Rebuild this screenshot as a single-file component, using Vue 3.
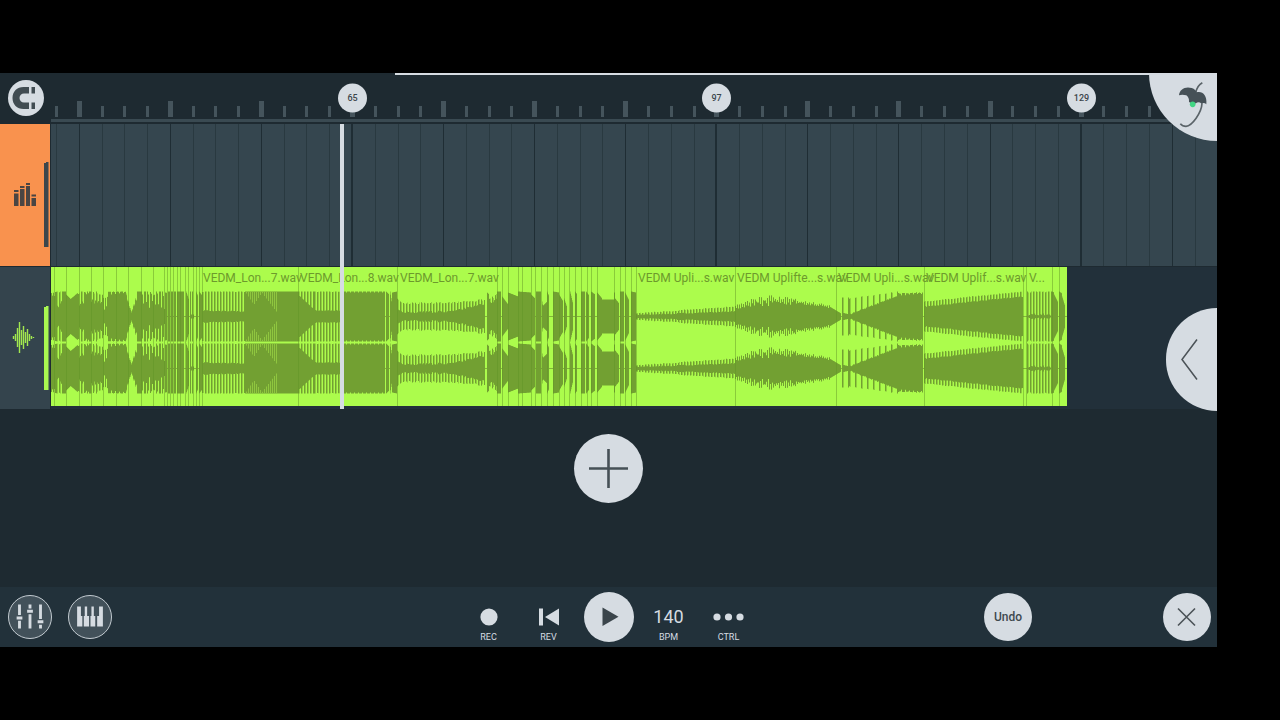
<template>
  <div class="screen">
    <main class="studio">
      <header class="topbar">
        <div class="snap">
          <button class="round snap-btn" aria-label="Snap">
            <svg width="36" height="36" viewBox="0 0 36 36">
              <path d="M21 7H15.500C9 7 4.500 11.500 4.500 18S9 29 15.500 29H21V22.500H16C13.500 22.500 11.500 20.500 11.500 18S13.500 13.500 16 13.500H21Z" fill="#414c52" />
              <path d="M23.500 7H27V13.500H23.500ZM23.500 22.500H27V29H23.500Z" fill="#414c52" />
            </svg>
          </button>
        </div>
        <svg class="ruler" height="51">
          <rect x="0" y="46" width="100%" height="3" fill="#3a4a52" />
          <rect
            v-for="tick in ticks"
            :key="tick.x"
            :x="tick.x - (tick.major ? 2.5 : 1.5)"
            :y="tick.major ? 28 : 33"
            :width="tick.major ? 5 : 3"
            :height="tick.major ? 16 : 11"
            fill="#45545c"
          />
          <g v-for="mark in marks" :key="mark.label">
            <circle :cx="mark.x" cy="25" r="14.500" fill="#d6dce2" />
            <text class="mark-text" :x="mark.x" y="28" text-anchor="middle">{{ mark.label }}</text>
          </g>
        </svg>
        <div class="overview"></div>
      </header>

      <section class="tracks">
        <div class="track">
          <button class="track-head drums" aria-label="Drum track">
            <svg width="50" height="142" viewBox="0 0 50 142">
              <g fill="#4a4543">
                <path d="M14 69.500H18.500V82H14ZM20 65H24.500V82H20ZM26 62H30V82H26ZM31.500 74H36V82H31.500Z" />
                <path d="M14 66H18.500V68H14ZM20 62H24.500V64H20ZM26 59H30V61H26ZM31.500 70.500H36V72.500H31.500Z" />
              </g>
              <path d="M44 39H46V38H48.500V123H44Z" fill="#3c474c" />
            </svg>
          </button>
          <svg class="lane" height="142">
            <rect
              v-for="tick in ticks"
              :key="tick.x"
              :x="tick.x - (tick.bold ? 1.5 : 0.5)"
              y="0"
              :width="tick.bold ? 2 : 1"
              height="142"
              :fill="tick.major ? '#1f2d34' : '#293940'"
            />
          </svg>
        </div>

        <div class="track">
          <button class="track-head audio" aria-label="Audio track">
            <svg width="50" height="142" viewBox="0 0 50 142">
              <path
                d="M13.500 69V72M15.500 67V74M17.500 61V80M19.500 55V86M21.500 63V78M23.500 59V82M25.500 65V76M27.500 62V79M29.500 67V74M31.500 69V72M33.500 70V71"
                stroke="#a2e84f"
                stroke-width="1.400"
              />
              <path d="M44 40H46V39H48.500V123H44Z" fill="#a9f750" />
            </svg>
          </button>
          <div class="lane empty">
            <div class="clip">
              <svg class="wave" width="1016" height="139">
                <rect x="0" y="49" width="1016" height="1" fill="#83b53a" />
                <rect x="0" y="101" width="1016" height="1" fill="#83b53a" />
                <path :d="wavePath" fill="#72a032" />
                <path :d="shadePath" fill="#8fc63f" />
                <rect v-for="x in cuts" :key="x" :x="x" y="0" width="1" height="139" fill="#5f9226" fill-opacity="0.45" />
              </svg>
              <div class="labels">
                <span v-for="(clip, i) in clips" :key="i" :style="{ width: clip.width + 'px' }">{{ clip.name }}</span>
              </div>
            </div>
          </div>
        </div>
        <div class="playhead"></div>
        <button class="drawer" aria-label="Open panel">
          <svg width="51" height="103" viewBox="0 0 51 103">
            <path d="M31 31.500L16 51.500L31 71.500" fill="none" stroke="#4b5257" stroke-width="1.500" />
          </svg>
        </button>
      </section>

      <section class="workspace">
        <button class="round add" aria-label="Add track">
          <svg width="69" height="69" viewBox="0 0 69 69">
            <path d="M15 34.500H54M34.500 15V54" stroke="#465056" stroke-width="2.600" />
          </svg>
        </button>
      </section>

      <footer class="transport">
        <div class="group">
          <div class="cell">
            <button class="round outlined" aria-label="Mixer">
              <svg width="44" height="44" viewBox="0 0 44 44" fill="#d6dce2">
                <path d="M9.500 9H12.500V20H9.500ZM9.500 26H12.500V34H9.500ZM8 21.500H14V24.500H8Z" />
                <path d="M20.500 9H23.500V13H20.500ZM20.500 19H23.500V34H20.500ZM19 14.500H25V17.500H19Z" />
                <path d="M31.500 9H34.500V24H31.500ZM31.500 30H34.500V34H31.500ZM30 25.500H36V28.500H30Z" />
              </svg>
            </button>
          </div>
          <div class="cell">
            <button class="round outlined" aria-label="Keyboard">
              <svg width="44" height="44" viewBox="0 0 44 44" fill="#d6dce2">
                <path d="M8.500 11H12.500V21H14V32H8.500ZM16.500 11H19V21H21V32H15.500V21H16.500ZM23.500 11H26V21H27.500V32H22.500V21H23.500ZM31.500 11H35.500V32H29.500V21H31.500Z" />
              </svg>
            </button>
          </div>
        </div>

        <div class="group">
          <button class="cell control">
            <svg width="32" height="22" viewBox="0 0 32 22"><circle cx="16" cy="11" r="8.600" fill="#d6dce2" /></svg>
            <span>REC</span>
          </button>
          <button class="cell control">
            <svg width="32" height="22" viewBox="0 0 32 22"><path d="M6 2.500H10V19.500H6ZM26 2.500V19.500L12 11Z" fill="#d6dce2" /></svg>
            <span>REV</span>
          </button>
          <div class="cell">
            <button class="round play" aria-label="Play">
              <svg width="50" height="50" viewBox="0 0 50 50"><path d="M18.500 15.500V34L34.500 24.800Z" fill="#3b454b" /></svg>
            </button>
          </div>
          <button class="cell control">
            <strong>140</strong>
            <span>BPM</span>
          </button>
          <button class="cell control">
            <svg width="32" height="22" viewBox="0 0 32 22" fill="#d6dce2">
              <circle cx="4" cy="11" r="3.600" /><circle cx="15.500" cy="11" r="3.600" /><circle cx="27" cy="11" r="3.600" />
            </svg>
            <span>CTRL</span>
          </button>
        </div>

        <div class="group right">
          <div class="cell"><button class="round small">Undo</button></div>
          <div class="cell">
            <button class="round small" aria-label="Close">
              <svg width="48" height="48" viewBox="0 0 48 48">
                <path d="M15 15.500L32 32.500M32 15.500L15 32.500" stroke="#4b5257" stroke-width="1.600" />
              </svg>
            </button>
          </div>
        </div>
      </footer>

      <button class="logo" aria-label="Main menu">
        <svg width="68" height="68" viewBox="267 9 204 204">
          <path d="M427 38Q412 46 407 68" fill="none" stroke="#5a6368" stroke-width="5" />
          <path d="M426 100C425 128 396 168 378 169C369 169 365 166 361 161" fill="none" stroke="#5a6368" stroke-width="5" />
          <path d="M357 76C358 58 376 48 395 54C404 57 408 62 410 67C427 62 442 76 439 103Q432 96 425 101Q415 93 408 100Q396 102 387 96Q388 82 379 76Q366 72 357 76Z" fill="#465157" />
          <circle cx="398" cy="103" r="8.500" fill="#42d684" />
        </svg>
      </button>
    </main>
  </div>
</template>

<script setup>
// one tick every two bars, timeline starts right of the track heads
const TICK = 22.77
const FIRST = 5.5

const ticks = Array.from({ length: 52 }, (_, i) => ({
  x: Math.floor(FIRST + i * TICK) + 0.5,
  major: i % 4 === 1,
  bold: i % 16 === 13
}))

const marks = [65, 97, 129].map((label, i) => ({
  label,
  x: Math.floor(FIRST + (13 + i * 16) * TICK) + 0.5
}))

const clips = [
  { name: '', width: 152 },
  { name: 'VEDM_Lon...7.wav', width: 97 },
  { name: 'VEDM_Lon...8.wav', width: 100 },
  { name: 'VEDM_Lon...7.wav', width: 238 },
  { name: 'VEDM Upli...s.wav', width: 99 },
  { name: 'VEDM Uplifte...s.wav', width: 101 },
  { name: 'VEDM Upli...s.wav', width: 88 },
  { name: 'VEDM Uplif...s.wav', width: 103 },
  { name: 'V...', width: 38 }
]

const cuts = [
  3, 15, 28, 40, 52, 65, 77, 90, 102, 113, 116, 119, 122, 126, 129, 134, 137, 142, 145, 148, 151,
  247, 346, 446, 451, 457, 467, 471, 480, 484, 490, 496, 502, 508, 513, 518, 524, 530, 536, 540,
  546, 563, 569, 574, 580, 585, 684, 785, 873, 972, 975, 1001, 1008
]

// from, to, peak from/to, valley from/to, period, peak width in a period, noise
const segments = [
  [0, 5, 25, 25, 19, 21, 2, 1, 3],
  [5, 11, 25, 25, 9, 14, 3, 1.5, 4],
  [11, 15, 25, 25, 25, 25, 1, 1, 0],
  [15, 20, 22, 17, 22, 17, 1, 1, 0],
  [20, 27, 18, 24, 18, 24, 1, 1, 0],
  [27, 34, 25, 25, 12, 15, 3, 1.5, 5],
  [34, 39, 25, 25, 22, 22, 2, 1, 3],
  [39, 52, 25, 24, 14, 16, 3, 1.5, 6],
  [52, 57, 18, 20, 5, 12, 2, 1, 2],
  [57, 75, 25, 25, 22, 24, 4, 3, 1],
  [75, 80, 23, 5, 20, 4, 2, 1, 0],
  [80, 86, 4, 23, 4, 18, 2, 1, 0],
  [86, 90, 25, 25, 25, 25, 1, 1, 0],
  [90, 116, 25, 24, 13, 11, 3, 2, 8],
  [117, 119, 25, 25, 25, 25, 1, 1, 0],
  [120, 122, 25, 25, 25, 25, 1, 1, 0],
  [123, 125, 25, 25, 25, 25, 1, 1, 0],
  [126, 133, 25, 25, 25, 25, 1, 1, 0],
  [135, 138, 25, 16, 25, 16, 1, 1, 0],
  [139, 143, 25, 25, 2, 2, 2, 1, 0],
  [145, 147, 25, 20, 25, 20, 1, 1, 0],
  [148, 151, 25, 21, 25, 21, 1, 1, 0],
  [151, 194, 25, 25, 6, 5, 3, 1.5, 1],
  [194, 247, 25, 25, 25, 25, 1, 1, 0],
  [247, 263, 25, 25, 22, 7, 3, 1.5, 0],
  [263, 292, 25, 25, 6, 6, 3, 1.5, 1],
  [292, 334, 25, 25, 24, 24, 4, 3, 0],
  [335, 338, 25, 22, 25, 22, 1, 1, 0],
  [339, 341, 25, 12, 25, 12, 1, 1, 0],
  [341, 346, 24, 25, 24, 25, 1, 1, 0],
  [346, 352, 18, 12, 8, 4, 3, 1.5, 1],
  [352, 400, 13, 14, 4, 5, 3, 1.5, 2],
  [400, 418, 14, 15, 5, 9, 3, 1.5, 2],
  [418, 434, 15, 17, 9, 13, 3, 1.5, 2],
  [436, 438, 24, 22, 24, 22, 1, 1, 0],
  [438, 446, 17, 22, 13, 17, 3, 1.5, 2],
  [446, 450, 25, 25, 25, 25, 1, 1, 0],
  [451, 457, 20, 12, 20, 12, 1, 1, 0],
  [457, 467, 24, 20, 24, 20, 1, 1, 0],
  [467, 480, 25, 24, 25, 24, 1, 1, 0],
  [480, 484, 22, 18, 22, 18, 1, 1, 0],
  [485, 490, 25, 25, 25, 25, 1, 1, 0],
  [491, 492, 15, 9, 15, 9, 1, 1, 0],
  [492, 496, 11, 15, 11, 15, 1, 1, 0],
  [496, 498, 25, 20, 25, 20, 1, 1, 0],
  [502, 508, 25, 24, 25, 24, 1, 1, 0],
  [508, 512, 22, 15, 22, 15, 1, 1, 0],
  [513, 516, 18, 9, 18, 9, 1, 1, 0],
  [519, 522, 25, 12, 25, 12, 1, 1, 0],
  [524, 526, 25, 22, 25, 22, 1, 1, 0],
  [530, 534, 25, 25, 25, 25, 1, 1, 0],
  [535, 538, 25, 21, 25, 21, 1, 1, 0],
  [540, 544, 25, 22, 25, 22, 1, 1, 0],
  [546, 551, 24, 18, 24, 18, 1, 1, 0],
  [551, 563, 17, 17, 17, 17, 1, 1, 0],
  [563, 564, 24, 24, 24, 24, 1, 1, 0],
  [564, 568, 18, 13, 18, 13, 1, 1, 0],
  [569, 573, 25, 25, 25, 25, 1, 1, 0],
  [574, 578, 24, 16, 24, 16, 1, 1, 0],
  [580, 585, 25, 24, 25, 24, 1, 1, 0],
  [585, 684, 3, 10, 1.5, 5, 3, 1.5, 1],
  [684, 700, 12, 14, 8, 11, 2, 1, 4],
  [700, 724, 15, 20, 12, 14, 2, 1, 6],
  [724, 750, 19, 15, 14, 14, 2, 1, 5],
  [750, 780, 15, 11, 13, 9, 2, 1, 2],
  [780, 790, 9, 3, 9, 3, 1, 1, 0],
  [791, 798, 19, 19, 4, 2, 6, 1.5, 0],
  [798, 847, 18, 25, 2, 21, 6, 1.5, 1],
  [847, 872, 23, 24, 21, 23, 4, 3, 1],
  [873, 972, 15, 25, 10, 20, 3, 1.5, 1],
  [976, 1001, 25, 25, 2, 2, 3, 1.5, 2],
  [1001, 1003, 25, 24, 25, 24, 1, 1, 0],
  [1003, 1007, 22, 14, 22, 14, 1, 1, 0],
  [1008, 1011, 25, 23, 25, 23, 1, 1, 0],
  [1011, 1014, 20, 10, 20, 10, 1, 1, 0]
]

const noise = (n) => {
  const s = Math.sin(n * 12.9898) * 43758.5453
  return s - Math.floor(s)
}

const buildWave = () => {
  let d = ''
  segments.forEach(([from, to, p0, p1, v0, v1, period, duty, jitter]) => {
    for (let x = from; x < to; x += 0.5) {
      const t = (x - from) / (to - from)
      const high = (x - from) % period < duty
      const level = high ? p0 + (p1 - p0) * t : v0 + (v1 - v0) * t
      const spread = (noise(Math.floor(x)) - 0.5) * jitter
      const amp = Math.max(1, Math.min(25, level + spread)).toFixed(1)
      d += `M${x} ${49.5 - amp}h.5v${amp * 2}h-.5z`
      d += `M${x} ${101.5 - amp}h.5v${amp * 2}h-.5z`
    }
  })
  return d
}

// quieter stripes of the phrase that narrows twice before the long hit
const buildShade = () => {
  let d = ''
  for (let x = 195; x < 226; x += 2) {
    const depth = x < 203 ? (x - 194) * 1.5 : x < 211 ? (211 - x) * 1.5 : (x - 210) * 1.3
    const h = Math.max(1, depth).toFixed(1)
    ;[25, 77].forEach((y) => {
      d += `M${x} ${y}h1v${h}h-1zM${x} ${y + 49 - h}h1v${h}h-1z`
    })
  }
  return d
}

const wavePath = buildWave()
const shadePath = buildShade()
</script>

<style>
body {
  margin: 0;
  background: #000;
}
</style>

<style scoped>
.screen {
  box-sizing: border-box;
  display: flex;
  min-height: 100vh;
  padding: 73px 63px 73px 0;
  background: #000;
  font-family: Roboto, "Liberation Sans", sans-serif;
}

.studio {
  position: relative;
  display: flex;
  flex: 1;
  flex-direction: column;
  min-width: 0;
  overflow: hidden;
  background: #1e2a31;
}

button {
  padding: 0;
  border: 0;
  background: none;
  color: #d6dce2;
  font-family: inherit;
  cursor: pointer;
}

svg {
  display: block;
}

.round {
  display: flex;
  align-items: center;
  justify-content: center;
  border-radius: 50%;
  background: #d6dce2;
}

.topbar {
  position: relative;
  display: flex;
  height: 51px;
}

.snap {
  display: flex;
  align-items: center;
  justify-content: center;
  width: 51px;
  height: 50px;
}

.snap-btn {
  width: 36px;
  height: 36px;
}

.ruler,
.lane {
  flex: 1;
  min-width: 0;
}

.mark-text {
  fill: #3b454b;
  font-size: 9px;
  font-weight: 500;
}

.overview {
  position: absolute;
  top: 0;
  right: 0;
  left: 395px;
  height: 2px;
  background: #d6dce2;
}

.tracks {
  position: relative;
  display: flex;
  flex-direction: column;
  gap: 1px;
}

.track {
  display: flex;
  height: 142px;
}

.track-head {
  width: 50px;
  margin-right: 1px;
}

.drums {
  background: #f9924e;
}

.audio {
  background: #34444d;
}

.lane {
  background: #35464f;
}

.empty {
  overflow: hidden;
  background: #22303a;
}

.clip {
  display: grid;
  width: 1016px;
  height: 139px;
  background: #acfc4c;
}

.wave,
.labels {
  grid-area: 1 / 1;
}

.labels {
  display: flex;
  color: #6d9a2c;
  font-size: 12px;
  line-height: 22px;
  white-space: nowrap;
}

.labels span {
  flex: none;
}

.playhead {
  position: absolute;
  top: 0;
  bottom: 0;
  left: 340px;
  width: 4px;
  background: #d6dce2;
}

.drawer {
  position: absolute;
  top: 184px;
  right: 0;
  border-radius: 52px 0 0 52px;
  background: #d6dce2;
}

.workspace {
  display: flex;
  flex: 1;
  align-items: flex-start;
  justify-content: center;
  padding-top: 25px;
}

.add {
  width: 69px;
  height: 69px;
}

.transport {
  display: grid;
  grid-template-columns: 1fr auto 1fr;
  height: 60px;
  background: #22313a;
}

.group {
  display: flex;
}

.right {
  gap: 119px;
  justify-content: flex-end;
}

.cell {
  display: flex;
  align-items: center;
  justify-content: center;
  width: 60px;
}

.control {
  flex-direction: column;
  gap: 2px;
  padding-top: 15px;
  font-size: 9px;
  line-height: 14px;
}

.control strong {
  font-size: 18px;
  font-weight: 400;
  line-height: 22px;
}

.outlined {
  box-sizing: border-box;
  width: 44px;
  height: 44px;
  border: 1px solid #c3cbd1;
  background: #42515a;
}

.play {
  width: 50px;
  height: 50px;
}

.small {
  width: 48px;
  height: 48px;
  color: #3f494f;
  font-size: 12px;
  font-weight: 500;
}

.logo {
  position: absolute;
  top: 0;
  right: 0;
  border-bottom-left-radius: 68px;
  background: #d6dce2;
}
</style>
